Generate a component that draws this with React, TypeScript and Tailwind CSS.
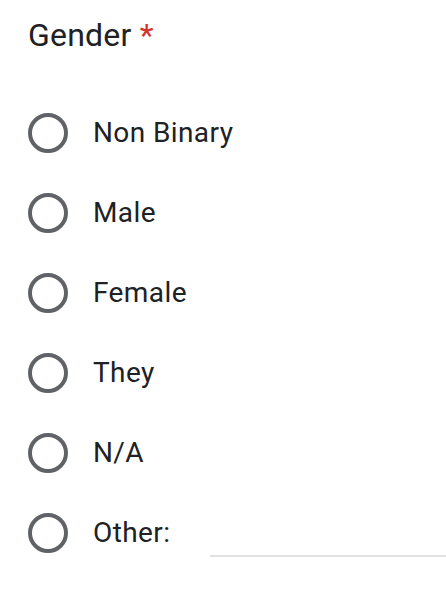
import React from "react";

const options = ["Non Binary", "Male", "Female", "They", "N/A"];

const Radio: React.FC = () => (
    <div className="w-[40px] h-[40px] shrink-0 rounded-full border-[4px] border-[#5f6368]" />
);

const App: React.FC = () => {
    return (
        <div className="min-h-screen bg-white pl-[28px] pt-[11px] font-['Roboto',sans-serif] text-[#202124]">
            <div className="text-[32px] leading-[48px] tracking-[0.2px]">
                Gender <span className="text-[#d93025]">*</span>
            </div>
            <div className="mt-[34px] flex flex-col">
                {options.map((o) => (
                    <label key={o} className="flex h-[80px] items-center gap-[25px]">
                        <Radio />
                        <span className="text-[28px] leading-[40px] tracking-[0.4px]">{o}</span>
                    </label>
                ))}
                <label className="flex h-[80px] items-center">
                    <Radio />
                    <span className="ml-[25px] text-[28px] leading-[40px] tracking-[0.4px]">Other:</span>
                    <div className="ml-[40px] flex-1 h-[44px] mt-[4px] border-b-2 border-[#e0e0e0]" />
                </label>
            </div>
        </div>
    );
};

export default App;
